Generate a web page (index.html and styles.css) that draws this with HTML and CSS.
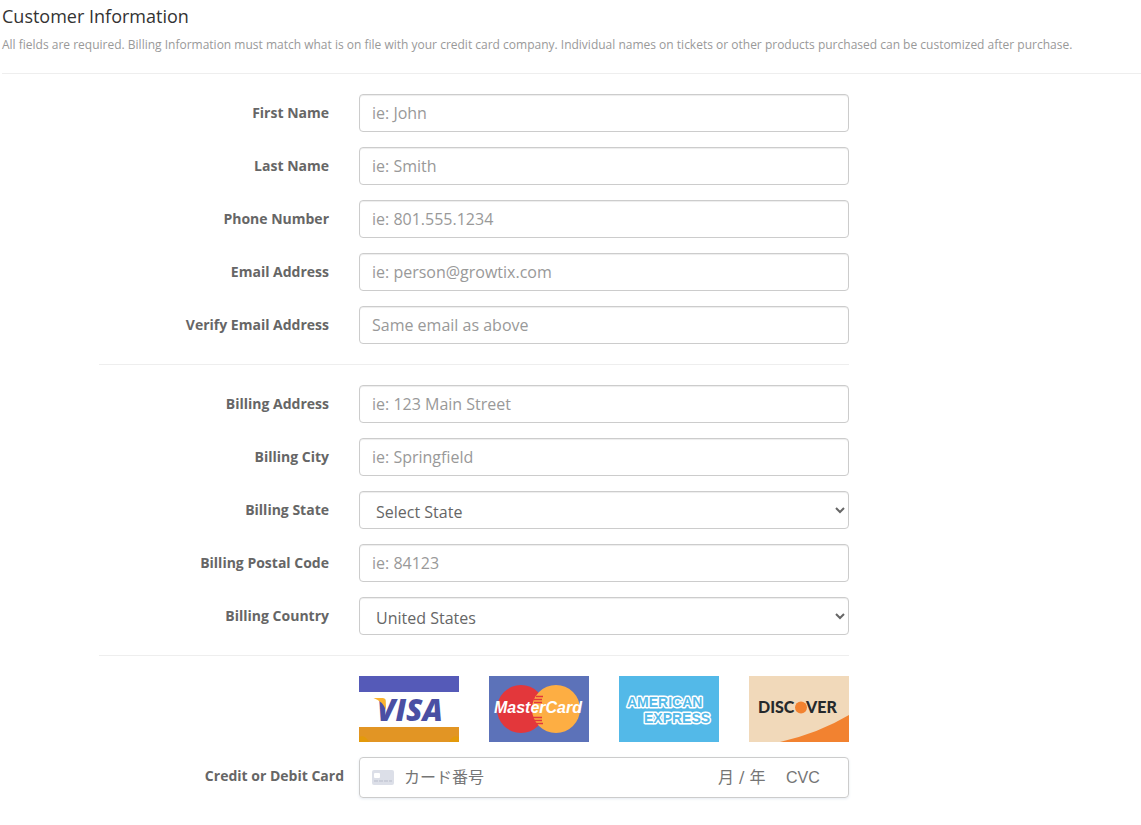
FILE: index.html
```html
<!DOCTYPE html>
<html lang="en">
<head>
<meta charset="utf-8">
<meta name="viewport" content="width=device-width, initial-scale=1">
<title>Customer Information</title>
<link rel="stylesheet" href="styles.css">
</head>
<body>
<header class="intro">
  <h1 class="intro-title">Customer Information</h1>
  <p class="intro-note">All fields are required. Billing Information must match what is on file with your credit card company. Individual names on tickets or other products purchased can be customized after purchase.</p>
</header>
<form class="checkout">
  <div class="fields">
    <div class="row"><label class="label" for="first">First Name</label><input class="control" id="first" type="text" placeholder="ie: John"></div>
    <div class="row"><label class="label" for="last">Last Name</label><input class="control" id="last" type="text" placeholder="ie: Smith"></div>
    <div class="row"><label class="label" for="phone">Phone Number</label><input class="control" id="phone" type="tel" placeholder="ie: 801.555.1234"></div>
    <div class="row"><label class="label" for="email">Email Address</label><input class="control" id="email" type="email" placeholder="ie: person@growtix.com"></div>
    <div class="row"><label class="label" for="verify">Verify Email Address</label><input class="control" id="verify" type="email" placeholder="Same email as above"></div>
  </div>
  <div class="fields">
    <div class="row"><label class="label" for="address">Billing Address</label><input class="control" id="address" type="text" placeholder="ie: 123 Main Street"></div>
    <div class="row"><label class="label" for="city">Billing City</label><input class="control" id="city" type="text" placeholder="ie: Springfield"></div>
    <div class="row"><label class="label" for="state">Billing State</label><select class="control select" id="state"><option>Select State</option></select></div>
    <div class="row"><label class="label" for="postal">Billing Postal Code</label><input class="control" id="postal" type="text" placeholder="ie: 84123"></div>
    <div class="row"><label class="label" for="country">Billing Country</label><select class="control select" id="country"><option>United States</option></select></div>
  </div>
  <div class="fields">
    <div class="row">
      <div class="brands">
        <svg class="brand" viewBox="0 0 100 66" role="img" aria-label="Visa">
          <path fill="#fff" d="M0 0h100v66H0z"/>
          <path fill="#555ab8" d="M0 0h100v16H0z"/>
          <path fill="#e29524" d="M0 51h100v15H0z"/>
          <path fill="#e39a0b" d="M0 61q6-3 10 5H0zM100 61q-6-3-10 5h10z"/>
          <text class="visa-text" x="18" y="45">VISA</text>
          <path fill="#fbb32e" d="M14.500 22h9.500q2.500 0 2.700 2.500L27 34Q23.500 25 14.500 22z"/>
        </svg>
        <svg class="brand" viewBox="0 0 100 66" role="img" aria-label="MasterCard">
          <path fill="#5c72b9" d="M0 0h100v66H0z"/>
          <circle cx="32" cy="33" r="24" fill="#e3373b"/>
          <circle cx="67" cy="33" r="24" fill="#fdae43"/>
          <path stroke="#e3373b" stroke-width="1.500" d="M47 20.500h7M45 23.500h8M45 26.500h8M44 41.500h9M45 44.500h8M47 47.500h7"/>
          <text class="mc-text" x="49" y="37" text-anchor="middle">MasterCard</text>
        </svg>
        <svg class="brand" viewBox="0 0 100 66" role="img" aria-label="American Express">
          <path fill="#53b9e8" d="M0 0h100v66H0z"/>
          <text class="amex-text" x="8" y="31">AMERICAN</text>
          <text class="amex-text" x="25" y="47">EXPRESS</text>
        </svg>
        <svg class="brand" viewBox="0 0 100 66" role="img" aria-label="Discover">
          <path fill="#f1d9ba" d="M0 0h100v66H0z"/>
          <path fill="#f28230" d="M31 66Q70 57 100 39v27z"/>
          <text class="discover-text" x="9" y="37">DISC</text>
          <text class="discover-text" x="57" y="37">VER</text>
          <circle cx="52" cy="31.500" r="6" fill="#f28230"/>
        </svg>
      </div>
    </div>
    <div class="row">
      <label class="label label-card" for="card">Credit or Debit Card</label>
      <div class="card-box">
        <svg class="card-icon" viewBox="0 0 22 15" aria-hidden="true">
          <rect width="22" height="15" rx="2" fill="#dcdfe8"/>
          <rect x="2" y="3" width="6" height="5" rx="1" fill="#fff"/>
          <path d="M2 11h18" stroke="#b9bdcb" stroke-dasharray="4 1"/>
        </svg>
        <input class="card-input card-number" id="card" type="text" placeholder="カード番号" lang="ja">
        <input class="card-input card-expiry" type="text" placeholder="月 / 年" aria-label="月 / 年" lang="ja">
        <input class="card-input card-cvc" type="text" placeholder="CVC" aria-label="CVC">
      </div>
    </div>
  </div>
</form>
</body>
</html>
```
FILE: styles.css
```css
* {
  box-sizing: border-box;
}

body {
  margin: 0;
  padding-left: 2px;
  background: #fff;
  color: #666;
  font: 14px/20px "Open Sans", sans-serif;
}

.intro {
  padding: 6px 0 18px;
  border-bottom: 1px solid #eee;
}

.intro-title {
  margin: 0 0 9px;
  color: #333;
  font-size: 18px;
  font-weight: 400;
  line-height: 20px;
}

.intro-note {
  margin: 0;
  color: #999;
  font-size: 12px;
}

.checkout {
  max-width: 847px;
  padding-left: 97px;
}

.fields {
  display: flex;
  flex-direction: column;
  gap: 15px;
  padding: 20px 0;
}

.fields + .fields {
  border-top: 1px solid #eee;
}

.row {
  display: grid;
  grid-template-columns: 230px minmax(0, 1fr);
  column-gap: 30px;
}

.label {
  padding-top: 9px;
  font-weight: 700;
  text-align: right;
}

.label-card {
  margin-right: -15px;
}

.control {
  width: 100%;
  height: 38px;
  padding: 6px 12px;
  border: 1px solid #ccc;
  border-radius: 4px;
  background: #fff;
  box-shadow: inset 0 1px 1px rgba(0, 0, 0, 0.075);
  color: #666;
  font: 16px/24px "Open Sans", sans-serif;
}

.control::placeholder {
  color: #999;
}

.select {
  padding: 8px 0 4px 12px;
}

.brands {
  display: flex;
  grid-column: 2;
  justify-content: space-between;
}

.brand {
  width: 100px;
  height: 66px;
}

.visa-text {
  fill: #4a4fa3;
  font: italic 800 30px "Open Sans", sans-serif;
}

.mc-text {
  fill: #fff;
  font: italic 700 16px "Liberation Sans", sans-serif;
}

.amex-text {
  fill: #53b9e8;
  stroke: #fff;
  stroke-width: 3px;
  stroke-linejoin: round;
  paint-order: stroke;
  font: 700 14px "Liberation Sans", sans-serif;
}

.discover-text {
  fill: #26292c;
  font: 900 16px Lato, sans-serif;
}

.card-box {
  display: flex;
  align-items: center;
  height: 41px;
  padding: 0 12px;
  border: 1px solid #ccc;
  border-radius: 4px;
  box-shadow: 0 1px 3px #e6ebf1;
}

.card-icon {
  flex: none;
  width: 22px;
  height: 15px;
  margin-right: 10px;
}

.card-input {
  min-width: 0;
  padding: 0;
  border: 0;
  background: none;
  color: #666;
  font: 16px/24px "Liberation Sans", "Noto Sans CJK JP", sans-serif;
}

.card-input::placeholder {
  color: #757575;
}

.card-number {
  flex: 1;
}

.card-expiry {
  width: 68px;
  font-family: "DejaVu Sans", "Noto Sans CJK JP", sans-serif;
}

.card-cvc {
  width: 50px;
}
```
